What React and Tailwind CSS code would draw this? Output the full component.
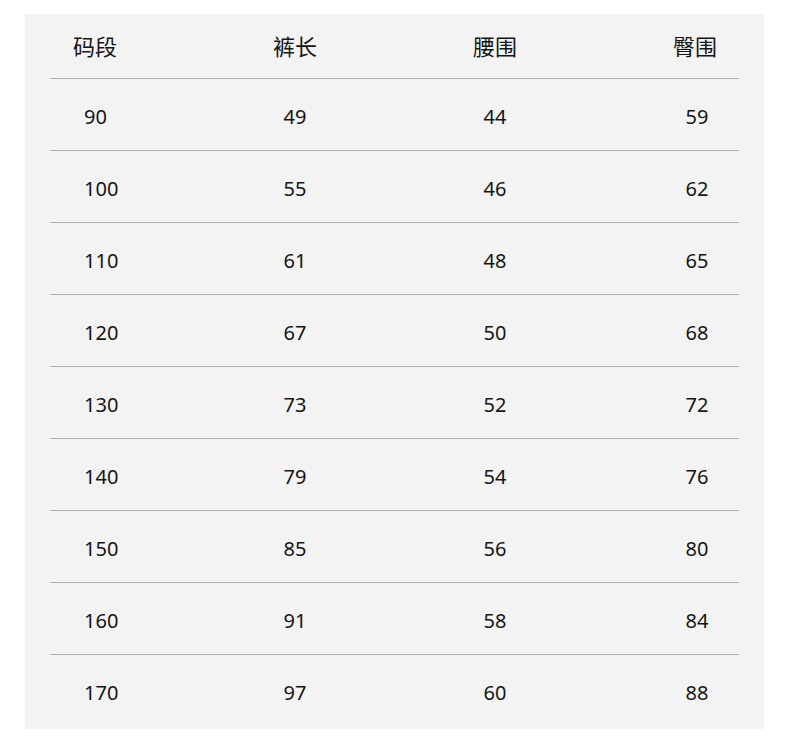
import React from "react";

const ROWS = [
  ["90", "49", "44", "59"],
  ["100", "55", "46", "62"],
  ["110", "61", "48", "65"],
  ["120", "67", "50", "68"],
  ["130", "73", "52", "72"],
  ["140", "79", "54", "76"],
  ["150", "85", "56", "80"],
  ["160", "91", "58", "84"],
  ["170", "97", "60", "88"],
];

const App = () => {
  return (
    <div
      className="w-[790px] h-[755px] bg-white pt-[14px] pl-[25px] text-[#151515]"
      style={{ fontFamily: '"Noto Sans", "Noto Sans CJK SC", sans-serif' }}
    >
      <div className="w-[739px] h-[715px] bg-[#f3f3f3] px-[25px] flex flex-col">
        {/* Header */}
        <div className="h-[64px] grid grid-cols-[145px_200px_200px_144px] items-center text-[22px] leading-none">
          <div className="pl-[23px]">码段</div>
          <div className="text-center">裤长</div>
          <div className="text-center">腰围</div>
          <div className="pl-[56px] text-center">臀围</div>
        </div>

        {/* Rows */}
        {ROWS.map((r, i) => (
          <div
            key={i}
            className={`grid grid-cols-[145px_200px_200px_144px] items-center border-t border-[#adadad] text-[20px] leading-none pt-[4px] ${
              i === ROWS.length - 1 ? "flex-1 pb-[3px]" : "h-[72px]"
            }`}
          >
            <div className="pl-[34px]">{r[0]}</div>
            <div className="text-center">{r[1]}</div>
            <div className="text-center">{r[2]}</div>
            <div className="pl-[60px] text-center">{r[3]}</div>
          </div>
        ))}
      </div>
    </div>
  );
};

export default App;
